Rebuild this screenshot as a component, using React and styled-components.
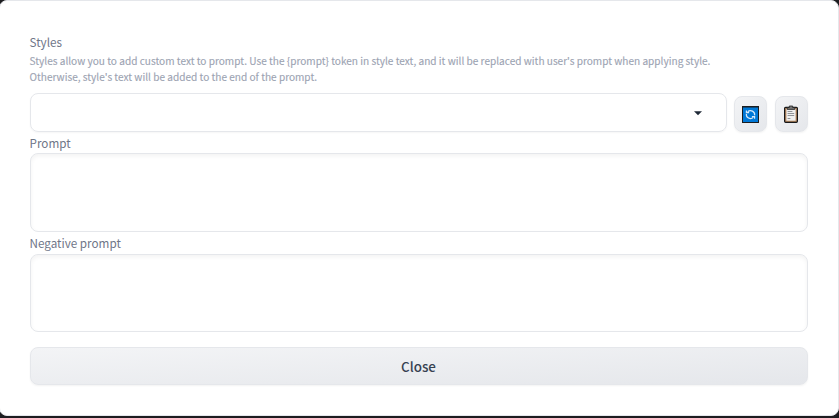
import React from "react";
import styled, { createGlobalStyle } from "styled-components";

const GlobalStyle = createGlobalStyle`
  *, *::before, *::after { box-sizing: border-box; }
  body {
    margin: 0;
    background: #1d1d20;
    overflow: hidden;
    font-family: "Noto Sans CJK SC", "Open Sans", sans-serif;
  }
`;

const Dialog = styled.main`
  display: flex;
  flex-direction: column;
  width: 840px;
  height: 416px;
  margin-left: -1px;
  padding: 32px 30px 0;
  background: #fff;
  border: 1px solid #e5e7eb;
  border-radius: 8px;
`;

const Label = styled.label`
  display: block;
  height: ${(p) => p.$height}px;
  margin-left: -0.5px;
  line-height: 18px;
  font-size: 11.7px;
  color: #6f7688;
  white-space: nowrap;
`;

const Hint = styled.p`
  margin: 0 0 0 -0.5px;
  height: 40px;
  line-height: 16px;
  font-size: 10.08px;
  -webkit-text-stroke: 0.12px #9ca3b2;
  color: #9ca3b2;
  white-space: nowrap;
`;

const StyleRow = styled.div`
  display: flex;
  align-items: flex-end;
  height: 39px;
  margin-bottom: 2px;
`;

const Select = styled.div`
  display: flex;
  align-items: center;
  justify-content: flex-end;
  width: 697px;
  height: 39px;
  margin-right: 7px;
  padding-right: 19px;
  border: 1px solid #e5e7eb;
  border-radius: 8px;
  box-shadow: 0 1px 2px rgba(0, 0, 0, 0.04);
`;

const ToolButton = styled.button`
  display: flex;
  align-items: center;
  justify-content: center;
  width: 33px;
  height: 36px;
  margin: 0 8px 0 0;
  padding: 0;
  border: 1px solid #e5e7eb;
  border-radius: 8px;
  background: linear-gradient(to bottom right, #f3f4f6, #e5e7eb);
  box-shadow: 0 1px 2px rgba(0, 0, 0, 0.05);
  &:last-child { margin-right: 0; padding-right: 1px; }
`;

const TextArea = styled.textarea`
  display: block;
  width: 778px;
  height: ${(p) => p.$height}px;
  margin: 0 0 ${(p) => p.$gap}px;
  border: 1px solid #e5e7eb;
  border-radius: 8px;
  background: #fff;
  box-shadow: inset 0 2px 4px rgba(0, 0, 0, 0.05);
  resize: none;
  outline: none;
`;

const CloseButton = styled.button`
  width: 778px;
  height: 38px;
  padding: 0 1px 0 0;
  border: 1px solid #e5e7eb;
  border-radius: 8px;
  background: linear-gradient(to bottom right, #f3f4f6, #e5e7eb);
  box-shadow: 0 1px 2px rgba(0, 0, 0, 0.05);
  font-family: inherit;
  font-size: 13.4px;
  font-weight: 500;
  line-height: 36px;
  color: #374151;
`;

const Caret = () => (
  <svg width="18" height="18" viewBox="0 0 18 18">
    <path d="M5 7.2h8L9 11.2z" fill="#1f2937" />
  </svg>
);

const RefreshIcon = () => (
  <svg width="17" height="17" viewBox="0 0 17 17">
    <path d="M0 0h17v17H0z" fill="#1b1d20" />
    <path d="M1 1.5h15V16H1z" fill="#0078d7" />
    <g fill="none" stroke="#d6e9f9" strokeWidth="1.2">
      <path d="M5.7 5.8A4.1 4.1 0 0 1 12.6 9.4M11.3 11.4A4.1 4.1 0 0 1 4.4 7.8" />
      <path d="M4.4 4.5v2.1h2.7M12.6 12.7v-2.1H9.9" />
    </g>
  </svg>
);

const ClipboardIcon = () => (
  <svg width="14" height="18" viewBox="0 0 14 18">
    <rect x="0.6" y="2.3" width="12.8" height="15" rx="1" fill="#b98b62" stroke="#17181b" strokeWidth="1.2" />
    <path d="M2.4 4h9.2v11.7H2.4z" fill="#f0f0f0" />
    <path d="M3.2 4.4V2.5h2.1V1h3.4v1.5h2.1v1.9z" fill="#777" stroke="#222" strokeWidth="0.8" />
    <path d="M3.6 6.5h4.8M3.6 8.5h6.6M3.6 10.5h6.6M3.6 13.5h2.8" stroke="#909398" strokeWidth="1" />
  </svg>
);

export default function App() {
  return (
    <>
      <GlobalStyle />
      <Dialog>
        <Label $height={20}>Styles</Label>
        <Hint>
          Styles allow you to add custom text to prompt. Use the {"{prompt}"} token in style text, and it will be replaced with user's prompt when applying style.
          <br />
          Otherwise, style's text will be added to the end of the prompt.
        </Hint>
        <StyleRow>
          <Select role="combobox" aria-label="Styles"><Caret /></Select>
          <ToolButton aria-label="Refresh"><RefreshIcon /></ToolButton>
          <ToolButton aria-label="Copy"><ClipboardIcon /></ToolButton>
        </StyleRow>
        <Label $height={19} htmlFor="prompt">Prompt</Label>
        <TextArea id="prompt" $height={79} $gap={2} />
        <Label $height={20} htmlFor="negative">Negative prompt</Label>
        <TextArea id="negative" $height={78} $gap={15} />
        <CloseButton>Close</CloseButton>
      </Dialog>
    </>
  );
}
